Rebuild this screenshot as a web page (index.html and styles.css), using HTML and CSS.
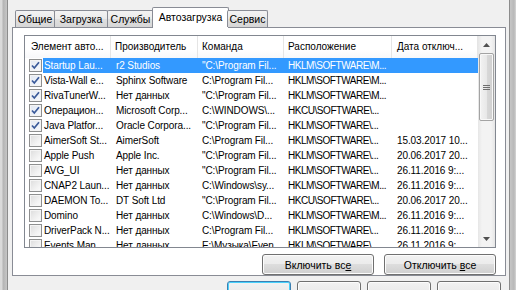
FILE: index.html
```html
<!DOCTYPE html>
<html lang="ru">
<head>
    <meta charset="UTF-8">
    <title>Конфигурация системы - Автозагрузка</title>
    <link rel="stylesheet" href="styles.css">
</head>
<body>
    <div class="window">
        <div class="frame-left"></div>
        <div class="dialog">
            <!-- вкладки -->
            <div class="tabs">
                <div class="tab w1">Общие</div>
                <div class="tab w2">Загрузка</div>
                <div class="tab w3">Службы</div>
                <div class="tab active">Автозагрузка</div>
                <div class="tab w5">Сервис</div>
            </div>

            <div class="panel">
                <div class="list">
                    <div class="list-main">
                        <div class="head">
                            <div class="hc c1">Элемент авто...</div>
                            <div class="hc c2">Производитель</div>
                            <div class="hc c3">Команда</div>
                            <div class="hc c4">Расположение</div>
                            <div class="hc c5">Дата отключ...</div>
                        </div>

                        <div class="row">
                            <div class="chk"><span class="cb on"><svg width="11" height="11" viewBox="0 0 11 11"><path d="M2 5.5 L4.3 8 L9 2.2" /></svg></span></div>
                            <div class="cells selected">
                                <div class="cell t1">Startup Lau...</div>
                                <div class="cell t2">r2 Studios</div>
                                <div class="cell t3">"C:\Program Fil...</div>
                                <div class="cell t4">HKLM\SOFTWARE\M...</div>
                                <div class="cell t5"></div>
                            </div>
                        </div>
                        <div class="row">
                            <div class="chk"><span class="cb on"><svg width="11" height="11" viewBox="0 0 11 11"><path d="M2 5.5 L4.3 8 L9 2.2" /></svg></span></div>
                            <div class="cells">
                                <div class="cell t1">Vista-Wall e...</div>
                                <div class="cell t2">Sphinx Software</div>
                                <div class="cell t3">C:\Program Fil...</div>
                                <div class="cell t4">HKLM\SOFTWARE\M...</div>
                                <div class="cell t5"></div>
                            </div>
                        </div>
                        <div class="row">
                            <div class="chk"><span class="cb on"><svg width="11" height="11" viewBox="0 0 11 11"><path d="M2 5.5 L4.3 8 L9 2.2" /></svg></span></div>
                            <div class="cells">
                                <div class="cell t1">RivaTunerW...</div>
                                <div class="cell t2">Нет данных</div>
                                <div class="cell t3">"C:\Program Fil...</div>
                                <div class="cell t4">HKLM\SOFTWARE\M...</div>
                                <div class="cell t5"></div>
                            </div>
                        </div>
                        <div class="row">
                            <div class="chk"><span class="cb on"><svg width="11" height="11" viewBox="0 0 11 11"><path d="M2 5.5 L4.3 8 L9 2.2" /></svg></span></div>
                            <div class="cells">
                                <div class="cell t1">Операцион...</div>
                                <div class="cell t2">Microsoft Corp...</div>
                                <div class="cell t3">C:\WINDOWS\...</div>
                                <div class="cell t4">HKCU\SOFTWARE\...</div>
                                <div class="cell t5"></div>
                            </div>
                        </div>
                        <div class="row">
                            <div class="chk"><span class="cb on"><svg width="11" height="11" viewBox="0 0 11 11"><path d="M2 5.5 L4.3 8 L9 2.2" /></svg></span></div>
                            <div class="cells">
                                <div class="cell t1">Java Platfor...</div>
                                <div class="cell t2">Oracle Corpora...</div>
                                <div class="cell t3">"C:\Program Fil...</div>
                                <div class="cell t4">HKLM\SOFTWARE\...</div>
                                <div class="cell t5"></div>
                            </div>
                        </div>
                        <div class="row">
                            <div class="chk"><span class="cb"></span></div>
                            <div class="cells">
                                <div class="cell t1">AimerSoft St...</div>
                                <div class="cell t2">AimerSoft</div>
                                <div class="cell t3">C:\Program Fil...</div>
                                <div class="cell t4">HKLM\SOFTWARE\...</div>
                                <div class="cell t5">15.03.2017 10...</div>
                            </div>
                        </div>
                        <div class="row">
                            <div class="chk"><span class="cb"></span></div>
                            <div class="cells">
                                <div class="cell t1">Apple Push</div>
                                <div class="cell t2">Apple Inc.</div>
                                <div class="cell t3">"C:\Program Fil...</div>
                                <div class="cell t4">HKLM\SOFTWARE\...</div>
                                <div class="cell t5">20.06.2017 20...</div>
                            </div>
                        </div>
                        <div class="row">
                            <div class="chk"><span class="cb"></span></div>
                            <div class="cells">
                                <div class="cell t1">AVG_UI</div>
                                <div class="cell t2">Нет данных</div>
                                <div class="cell t3">"C:\Program Fil...</div>
                                <div class="cell t4">HKLM\SOFTWARE\...</div>
                                <div class="cell t5">26.11.2016 9:...</div>
                            </div>
                        </div>
                        <div class="row">
                            <div class="chk"><span class="cb"></span></div>
                            <div class="cells">
                                <div class="cell t1">CNAP2 Laun...</div>
                                <div class="cell t2">Нет данных</div>
                                <div class="cell t3">C:\Windows\sy...</div>
                                <div class="cell t4">HKLM\SOFTWARE\M...</div>
                                <div class="cell t5">26.11.2016 9:...</div>
                            </div>
                        </div>
                        <div class="row">
                            <div class="chk"><span class="cb"></span></div>
                            <div class="cells">
                                <div class="cell t1">DAEMON To...</div>
                                <div class="cell t2">DT Soft Ltd</div>
                                <div class="cell t3">"C:\Program Fil...</div>
                                <div class="cell t4">HKCU\SOFTWARE\...</div>
                                <div class="cell t5">20.06.2017 20...</div>
                            </div>
                        </div>
                        <div class="row">
                            <div class="chk"><span class="cb"></span></div>
                            <div class="cells">
                                <div class="cell t1">Domino</div>
                                <div class="cell t2">Нет данных</div>
                                <div class="cell t3">C:\Windows\D...</div>
                                <div class="cell t4">HKLM\SOFTWARE\M...</div>
                                <div class="cell t5">26.11.2016 9:...</div>
                            </div>
                        </div>
                        <div class="row">
                            <div class="chk"><span class="cb"></span></div>
                            <div class="cells">
                                <div class="cell t1">DriverPack N...</div>
                                <div class="cell t2">Нет данных</div>
                                <div class="cell t3">C:\Program Fil...</div>
                                <div class="cell t4">HKLM\SOFTWARE\...</div>
                                <div class="cell t5">26.11.2016 9:...</div>
                            </div>
                        </div>
                        <div class="row">
                            <div class="chk"><span class="cb"></span></div>
                            <div class="cells">
                                <div class="cell t1">Events Man...</div>
                                <div class="cell t2">Нет данных</div>
                                <div class="cell t3">E:\Музыка\Even...</div>
                                <div class="cell t4">HKLM\SOFTWARE\...</div>
                                <div class="cell t5">26.11.2016 9:...</div>
                            </div>
                        </div>
                    </div>

                    <!-- полоса прокрутки -->
                    <div class="scrollbar">
                        <div class="arrow"><svg width="7" height="4" viewBox="0 0 7 4"><path d="M0 4 L3.5 0 L7 4 Z" /></svg></div>
                        <div class="thumb"><svg width="7" height="5" viewBox="0 0 7 5"><path d="M0 0.5 H7 M0 2.5 H7 M0 4.5 H7" /></svg></div>
                        <div class="arrow down"><svg width="7" height="4" viewBox="0 0 7 4"><path d="M0 0 L3.5 4 L7 0 Z" /></svg></div>
                    </div>
                </div>

                <div class="actions">
                    <button class="btn">Включить вс<u>е</u></button>
                    <button class="btn">Отключить <u>в</u>се</button>
                </div>
            </div>

            <div class="footer">
                <div class="edge default"></div>
                <div class="edge"></div>
                <div class="edge"></div>
                <div class="edge"></div>
            </div>
        </div>
        <div class="frame-right"></div>
    </div>
</body>
</html>
```

FILE: styles.css
```css
* {
    box-sizing: border-box;
}
body {
    margin: 0;
    font-family: "Liberation Sans", Arial, sans-serif;
    font-size: 10px;
    color: #000;
    background-color: #f0f0f0;
    overflow: hidden;
}
.window {
    display: flex;
    width: 516px;
    height: 290px;
}
.frame-left {
    width: 8px;
    background: linear-gradient(to right, #dadada 0, #dadada 2px, #b4b4b4 3px, #c6c6c6 7px);
    border-right: 1px solid #8c8c8c;
}
.frame-right {
    width: 7px;
    background: linear-gradient(to right, #c6c6c6, #b8b8b8 4px, #d6d6d6);
    border-left: 1px solid #8c8c8c;
}
.dialog {
    flex: 1;
    display: flex;
    flex-direction: column;
    padding: 7px 3px 0 4px;
    background-color: #f0f0f0;
}

/* вкладки */
.tabs {
    display: flex;
    height: 21px;
    margin-bottom: -1px;
    padding-left: 3px;
    position: relative;
    z-index: 1;
    font-size: 10.5px;
}
.tab {
    height: 17px;
    margin-top: 3px;
    margin-left: -1px;
    border: 1px solid #898c95;
    border-bottom: none;
    border-radius: 2px 2px 0 0;
    background: linear-gradient(#f3f3f3, #ebebeb 50%, #e0e0e0 50%, #d6d6d6);
    display: flex;
    align-items: center;
    justify-content: center;
    white-space: nowrap;
}
.tab.w1 {
    width: 40px;
    margin-left: 0;
}
.tab.w2 {
    width: 54px;
}
.tab.w3 {
    width: 47px;
}
.tab.w5 {
    width: 41px;
}
.tab.active {
    width: 77px;
    height: 21px;
    margin-top: 0;
    margin-left: -2px;
    margin-right: -1px;
    background: #fff;
    align-items: flex-start;
    padding-top: 3px;
}

.panel {
    height: 256px;
    border: 1px solid #898c95;
    background-color: #fff;
    padding: 7px 9px 0 11px;
}

/* список */
.list {
    display: flex;
    height: 213px;
    border: 1px solid #828790;
    background-color: #fff;
}
.list-main {
    flex: 1;
    overflow: hidden;
}
.head {
    display: flex;
    height: 22px;
}
.hc {
    height: 22px;
    line-height: 21px;
    padding-left: 5px;
    border-right: 1px solid #e5e5e5;
    white-space: nowrap;
    overflow: hidden;
    text-overflow: ellipsis;
    background: linear-gradient(#ffffff, #ffffff 60%, #f7f8fa);
}
.hc.c1 {
    width: 86px;
    padding-left: 6px;
}
.hc.c2 {
    width: 87px;
    padding-left: 4px;
}
.hc.c3 {
    width: 86px;
    padding-left: 4px;
}
.hc.c4 {
    width: 108px;
    padding-left: 4px;
}
.hc.c5 {
    width: 86px;
}
.row {
    display: flex;
    height: 15px;
    line-height: 15px;
}
.chk {
    width: 18px;
    padding: 1px 0 0 4px;
}
.cb {
    display: block;
    width: 13px;
    height: 13px;
    border: 1px solid #8e8f8f;
    background: linear-gradient(135deg, #dcdcdc, #f4f4f4 70%, #fbfbfb);
    box-shadow: inset 0 0 0 1px #f4f4f4;
}
.cb.on {
    background: linear-gradient(135deg, #e2e8f2, #f7f9fc);
}
.cb svg {
    display: block;
}
.cb path {
    fill: none;
    stroke: #3a5a9a;
    stroke-width: 1.7;
}
.cells {
    display: flex;
    flex: 1;
}
.cells.selected {
    background-color: #3399ff;
    color: #fff;
}
.cell {
    white-space: nowrap;
    overflow: hidden;
    text-overflow: ellipsis;
    padding-left: 5px;
    letter-spacing: -0.1px;
}
.cell.t1 {
    width: 68px;
    padding-left: 1px;
}
.cell.t2 {
    width: 87px;
}
.cell.t3 {
    width: 86px;
    padding-left: 4px;
}
.cell.t4 {
    width: 108px;
    padding-left: 4px;
    letter-spacing: -0.45px;
}
.cell.t5 {
    width: 86px;
}

/* полоса прокрутки */
.scrollbar {
    width: 17px;
    display: flex;
    flex-direction: column;
    background: linear-gradient(to right, #e6e6e6, #f3f3f3 4px, #f3f3f3 13px, #e6e6e6);
}
.arrow {
    height: 17px;
    display: flex;
    align-items: center;
    justify-content: center;
}
.arrow path {
    fill: #505050;
}
.arrow.down {
    margin-top: auto;
}
.thumb {
    height: 68px;
    margin: 0 1px;
    border: 1px solid #a3a3a3;
    border-radius: 2px;
    background: linear-gradient(to right, #f3f3f3, #e8e8e8 50%, #d9d9d9 50%, #d0d0d0);
    box-shadow: inset 0 0 0 1px #f8f8f8;
    display: flex;
    align-items: center;
    justify-content: center;
}
.thumb path {
    stroke: #6f6f6f;
    stroke-width: 1;
}

/* кнопки */
.actions {
    display: flex;
    justify-content: flex-end;
    gap: 10px;
    margin-top: 6px;
}
.btn {
    width: 112px;
    height: 21px;
    padding: 0;
    border: 1px solid #707070;
    border-radius: 3px;
    background: linear-gradient(#f2f2f2, #ebebeb 50%, #dddddd 50%, #cfcfcf);
    box-shadow: inset 0 0 0 1px #fcfcfc;
    font-family: "Liberation Sans", Arial, sans-serif;
    font-size: 10.5px;
    color: #000;
}
.footer {
    display: flex;
    gap: 6px;
    margin-top: 5px;
    padding-left: 215px;
}
.edge {
    width: 64px;
    height: 21px;
    border: 1px solid #707070;
    border-radius: 3px;
    background: linear-gradient(#f2f2f2, #ebebeb 50%, #dddddd 50%, #cfcfcf);
    box-shadow: inset 0 0 0 1px #fcfcfc;
}
.edge.default {
    border-color: #3c7fb1;
    box-shadow: inset 0 0 0 1px #48d1fc;
}
```
